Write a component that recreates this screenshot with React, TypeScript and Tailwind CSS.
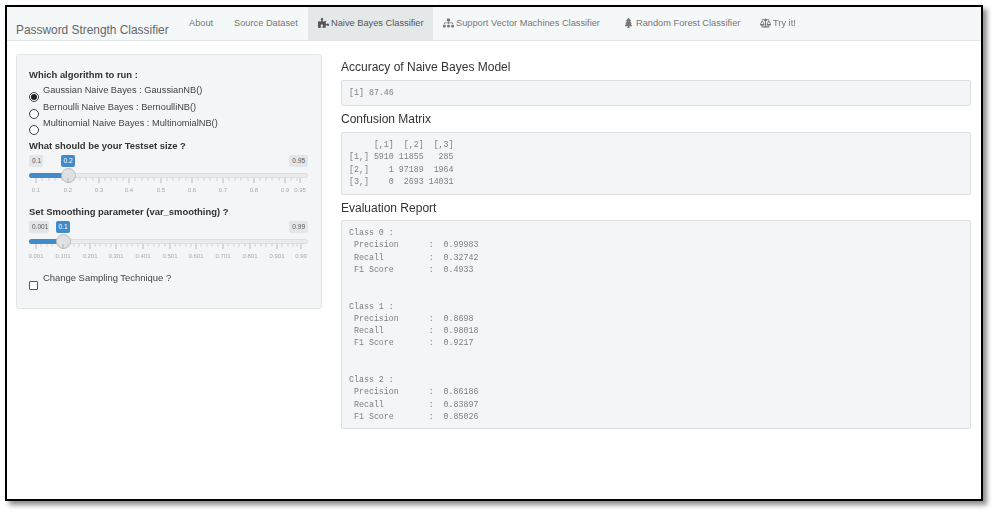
import React from "react";
import { FaPuzzlePiece, FaSitemap, FaTree, FaBalanceScale } from "react-icons/fa";

const tabs = [
  { label: "About", cls: "w-[50px] pl-[20px]" },
  { label: "Source Dataset", cls: "w-[89px] pl-[15px]" },
  { label: "Naive Bayes Classifier", Icon: FaPuzzlePiece, cls: "w-[125px] pl-[10px] bg-[#e5e8e9] text-[#555]" },
  { label: "Support Vector Machines Classifier", Icon: FaSitemap, cls: "w-[178px] pl-[10px]" },
  { label: "Random Forest Classifier", Icon: FaTree, cls: "w-[138px] pl-[12px]" },
  { label: "Try it!", Icon: FaBalanceScale, cls: "w-[70px] pl-[11px]" },
];

function Slider({ min, max, value, minW, valW, valLeft, handle, ticks, labels, minor }: any) {
  return (
    <div className="relative h-[48px] w-[279px]">
      <div className="flex h-[12px] justify-between">
        <span className="rounded-[2px] bg-[#e3e6e7] px-[3px] text-[6.5px] leading-[11px] text-[#555]" style={{ width: minW }}>{min}</span>
        <span className="rounded-[2px] bg-[#e3e6e7] px-[3px] text-[6.5px] leading-[11px] text-[#555]">{max}</span>
      </div>
      <span className="absolute top-0 rounded-[2px] bg-[#428bca] text-center text-[6.5px] leading-[12px] text-white" style={{ left: valLeft, width: valW }}>{value}</span>
      <div className="absolute left-0 right-0 top-[18px] h-[5px] rounded-full border border-[#ddd] bg-[#eaecec]" />
      <div className="absolute left-0 top-[18px] h-[5px] rounded-l-full bg-[#428bca]" style={{ width: handle }} />
      <div className="absolute top-[13px] h-[15px] w-[15px] rounded-full border border-[#bbb] bg-[#dfe1e2]" style={{ left: handle - 7 }} />
      <svg className="absolute left-0 top-[23px]" width="279" height="7">
        {minor.map((x: number) => <line key={x} x1={x} x2={x} y1="0" y2="3" stroke="#c4c6c7" strokeWidth="0.7" />)}
        {ticks.map((x: number) => <line key={x} x1={x} x2={x} y1="0" y2="5" stroke="#aaa" strokeWidth="0.8" />)}
      </svg>
      {labels.map((l: string, i: number) => (
        <span key={l} className="absolute top-[30px] w-[24px] -translate-x-1/2 text-center text-[6px] leading-[10px] text-[#aaa]" style={{ left: ticks[i] }}>{l}</span>
      ))}
    </div>
  );
}

const t1 = [7, 39, 70, 100, 132, 163, 194, 225, 256, 271];
const t1Minor = [13, 20, 26, 33, 45, 51, 57, 64, 76, 82, 88, 94, 106, 113, 119, 125, 138, 144, 150, 157, 169, 175, 181, 188, 200, 206, 212, 219, 231, 237, 243, 250, 262, 268];
const t2 = [7, 34, 61, 87, 114, 141, 167, 194, 221, 248, 272];
const t2Minor = [12, 18, 23, 29, 39, 45, 50, 56, 66, 71, 77, 82, 92, 98, 103, 109, 119, 125, 130, 136, 146, 151, 157, 162, 172, 178, 183, 189, 199, 205, 210, 216, 226, 232, 237, 243, 253, 259, 264, 268];

const report = `Class 0 :
 Precision      :  0.99983
 Recall         :  0.32742
 F1 Score       :  0.4933


Class 1 :
 Precision      :  0.8698
 Recall         :  0.98018
 F1 Score       :  0.9217


Class 2 :
 Precision      :  0.86186
 Recall         :  0.83897
 F1 Score       :  0.85026`;

const matrix = `     [,1]  [,2]  [,3]
[1,] 5910 11855   285
[2,]    1 97189  1964
[3,]    0  2693 14031`;

const pre = "mb-[6px] rounded-[2px] border border-[#dcdfe0] bg-[#f3f5f6] pl-[7px] font-['Liberation_Mono',monospace] text-[8.3px] leading-[12.25px] text-[#808080]";

function Radio({ label, on }: { label: string; on?: boolean }) {
  return (
    <div className="flex h-[16.6px] items-start">
      <span className="mt-[4px] flex h-[10px] w-[10px] shrink-0 items-center justify-center rounded-full border border-[#444] bg-white">
        {on && <span className="h-[6px] w-[6px] rounded-full bg-[#222]" />}
      </span>
      <span className="ml-[4px] mt-[-4px] text-[9.25px] leading-[12px] text-[#444]">{label}</span>
    </div>
  );
}

export default function App() {
  return (
    <div className="h-[514px] w-[997px] bg-white p-[5px] font-['Liberation_Sans',sans-serif]">
      <div className="h-[496px] w-[978px] border-2 border-black bg-white shadow-[4px_4px_5px_rgba(0,0,0,0.45)]">
        <div className="blur-[0.3px]">
          <nav className="flex h-[34px] border-b border-[#e3e6e7] bg-[#f5f8f9] text-[9.25px] text-[#777]">
            <div className="w-[162px] whitespace-nowrap pl-[9px] pt-[16px] text-[11.9px] leading-[14px] text-[#666]">Password Strength Classifier</div>
            {tabs.map(({ label, Icon, cls }) => (
              <div key={label} className={`flex h-[33px] items-start gap-[2px] pt-[10px] leading-[12px] ${cls}`}>
                {Icon && <Icon className="mt-[1px] h-[10px] w-[11px] shrink-0" />}
                <span className="whitespace-nowrap">{label}</span>
              </div>
            ))}
          </nav>
          <div className="flex items-start pl-[9px] pt-[13px]">
            <aside className="h-[255px] w-[306px] shrink-0 rounded-[3px] border border-[#e3e6e7] bg-[#f3f5f6] pl-[12px] pt-[14px]">
              <div className="mb-[7px] text-[9.43px] font-bold leading-[12px] text-[#333]">Which algorithm to run :</div>
              <Radio label="Gaussian Naive Bayes : GaussianNB()" on />
              <Radio label="Bernoulli Naive Bayes : BernoulliNB()" />
              <Radio label="Multinomial Naive Bayes : MultinomialNB()" />
              <div className="mb-[3px] mt-[2px] text-[9.43px] font-bold leading-[12px] text-[#333]">What should be your Testset size ?</div>
              <Slider min="0.1" max="0.95" value="0.2" minW={14} valW={14} valLeft={32} handle={39} ticks={t1} minor={t1Minor}
                labels={["0.1", "0.2", "0.3", "0.4", "0.5", "0.6", "0.7", "0.8", "0.9", "0.95"]} />
              <div className="mb-[3px] mt-[3px] text-[9.43px] font-bold leading-[12px] text-[#333]">Set Smoothing parameter (var_smoothing) ?</div>
              <Slider min="0.001" max="0.99" value="0.1" minW={20} valW={14} valLeft={27} handle={34} ticks={t2} minor={t2Minor}
                labels={["0.001", "0.101", "0.201", "0.301", "0.401", "0.501", "0.601", "0.701", "0.801", "0.901", "0.99"]} />
              <div className="mt-[3px] flex items-start">
                <span className="mt-[9px] h-[9px] w-[9px] rounded-[1px] border border-[#555] bg-white" />
                <span className="ml-[5px] text-[9.43px] leading-[12px] text-[#444]">Change Sampling Technique ?</span>
              </div>
            </aside>
            <main className="ml-[19px] w-[630px]">
              <h3 className="mb-[6px] mt-[6px] text-[12px] leading-[14px] text-[#333]">Accuracy of Naive Bayes Model</h3>
              <pre className={`${pre} h-[26px] pt-[6px]`}>[1] 87.46</pre>
              <h3 className="mb-[6px] text-[12px] leading-[14px] text-[#333]">Confusion Matrix</h3>
              <pre className={`${pre} h-[63px] pt-[6px]`}>{matrix}</pre>
              <h3 className="mb-[5px] text-[12px] leading-[14px] text-[#333]">Evaluation Report</h3>
              <pre className={`${pre} h-[209px] pt-[6px]`}>{report}</pre>
            </main>
          </div>
        </div>
      </div>
    </div>
  );
}
